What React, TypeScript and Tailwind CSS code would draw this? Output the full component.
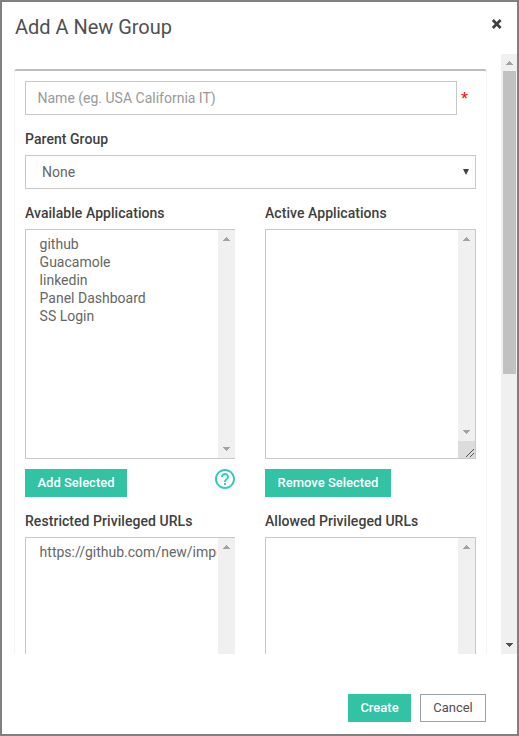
import React from "react";

function Arrow({ down = false, color = "#a3a3a3" }: { down?: boolean; color?: string }) {
  return (
    <svg width="7" height="4" viewBox="0 0 7 4" shapeRendering="crispEdges" fill={color} className="block">
      {down ? (
        <path d="M0 0h7v1H0zM1 1h5v1H1zM2 2h3v1H2zM3 3h1v1H3z" />
      ) : (
        <path d="M3 0h1v1H3zM2 1h3v1H2zM1 2h5v1H1zM0 3h7v1H0z" />
      )}
    </svg>
  );
}

function Label({ children }: { children: React.ReactNode }) {
  return <div className="h-[18px] text-[14px] leading-[18px] font-medium tracking-[0.05px] whitespace-nowrap text-[#404040]">{children}</div>;
}

function ListBox({ items, resizable = false }: { items: string[]; resizable?: boolean }) {
  return (
    <div
      className={
        "flex h-[230px] border-y border-l border-[#c8c8c8] bg-white " +
        (resizable ? "w-[211px] border-r" : "w-[210px]")
      }
    >
      <ul className="mr-px min-w-0 flex-1 overflow-hidden pt-[5px] pl-[13.6px] text-[14px] leading-[18px] text-[#666666]">
        {items.map((item) => (
          <li key={item} className="h-[18px] whitespace-nowrap">
            {item}
          </li>
        ))}
      </ul>
      <div className="flex w-[17px] shrink-0 flex-col bg-[#f0f0f0]">
        <div className="flex flex-1 flex-col items-center justify-between pt-[7px] pb-[7px]">
          <Arrow />
          <Arrow down />
        </div>
        {resizable && (
          <svg width="17" height="17" viewBox="0 0 17 17" className="block bg-[#dcdcdc]">
            <path d="M8 16 L16 8 M12 16 L16 12" stroke="#555" strokeWidth="1" fill="none" />
          </svg>
        )}
      </div>
    </div>
  );
}

function Button({ children, className }: { children: React.ReactNode; className: string }) {
  return (
    <button
      className={
        "flex h-[28px] items-center justify-center text-[13px] leading-[18px] whitespace-nowrap " + className
      }
    >
      {children}
    </button>
  );
}

export default function App() {
  return (
    <div className="flex h-[736px] w-[519px] flex-col overflow-hidden border-2 border-[#808080] bg-white font-['Roboto',sans-serif]">
      <header className="flex h-[52px] shrink-0 justify-between pt-[11px] pr-[14px] pl-[13px]">
        <h1 className="text-[20px] leading-[28px] tracking-[-0.03px] text-[#505050]">Add A New Group</h1>
        <button aria-label="Close" className="mt-[6px] h-[10px] w-[12px]">
          <svg width="12" height="10" viewBox="0 0 12 10" className="block">
            <path d="M1.8 1 L9.6 9 M9.6 1 L1.8 9" stroke="#404040" strokeWidth="2.7" />
          </svg>
        </button>
      </header>

      <div className="flex h-[600px] shrink-0">
        <main className="flex-1 overflow-hidden pt-[15px] pl-[12px]">
          <div className="h-[700px] w-[473px] rounded-[3px] border-x border-t-2 border-x-[#f5f5f5] border-t-[#bebebe] pt-[10px] pl-[10px]">
            <div className="flex">
              <input
                className="h-[34px] w-[432px] border border-[#c8c8c8] px-[11.5px] text-[14px] text-[#606060] placeholder:text-[#999999]"
                placeholder="Name (eg. USA California IT)"
              />
              <span className="ml-[4px] pt-[8px] font-['Liberation_Sans',sans-serif] text-[18px] leading-[20px] text-[#ff0000]">*</span>
            </div>
            <div className="mt-[15px]">
              <Label>Parent Group</Label>
            </div>
            <div className="mt-[7px] flex h-[34px] w-[451px] items-center justify-between border border-[#c8c8c8] pr-[6px] pl-[16px] text-[14px] text-[#666666]">
              <span>None</span>
              <svg width="6" height="6" viewBox="0 0 6 6" className="block">
                <path d="M0 0h6L3 6z" fill="#404040" />
              </svg>
            </div>
            <div className="mt-[15px] flex gap-[30px]">
              <section className="w-[210px]">
                <Label>Available Applications</Label>
                <div className="mt-[7px]">
                  <ListBox items={["github", "Guacamole", "linkedin", "Panel Dashboard", "SS Login"]} />
                </div>
                <div className="mt-[10px] flex h-[28px] justify-between">
                  <Button className="w-[102px] bg-[#32c2a4] font-medium text-white">Add Selected</Button>
                  <svg width="20" height="20" viewBox="2 2 20 20" className="block" fill="#36cbb9">
                    <path d="M11 18h2v-2h-2v2zm1-16C6.48 2 2 6.48 2 12s4.48 10 10 10 10-4.48 10-10S17.52 2 12 2zm0 18c-4.41 0-8-3.59-8-8s3.59-8 8-8 8 3.590 8 8-3.590 8-8 8zm0-14c-2.210 0-4 1.790-4 4h2c0-1.100.9-2 2-2s2 .9 2 2c0 2-3 1.750-3 5h2c0-2.250 3-2.500 3-5 0-2.210-1.790-4-4-4z" />
                  </svg>
                </div>
              </section>
              <section className="w-[211px]">
                <Label>Active Applications</Label>
                <div className="mt-[7px]">
                  <ListBox items={[]} resizable />
                </div>
                <Button className="mt-[10px] w-[126px] bg-[#32c2a4] font-medium text-white">Remove Selected</Button>
              </section>
            </div>
            <div className="mt-[15px] flex gap-[30px]">
              <section className="w-[210px]">
                <Label>Restricted Privileged URLs</Label>
                <div className="mt-[7px]">
                  <ListBox items={["https://github.com/new/import"]} />
                </div>
              </section>
              <section className="w-[211px]">
                <Label>Allowed Privileged URLs</Label>
                <div className="mt-[7px]">
                  <ListBox items={[]} resizable />
                </div>
              </section>
            </div>
          </div>
        </main>
        <div className="flex w-[16px] shrink-0 flex-col items-center justify-between bg-[#f0f0f0] pt-[7px] pb-[7px]">
          <div className="flex flex-col items-center gap-[6px]">
            <Arrow />
            <div className="ml-[1px] h-[303px] w-[13px] bg-[#c1c1c1]" />
          </div>
          <Arrow down color="#505050" />
        </div>
      </div>

      <footer className="flex flex-1 justify-end gap-[9px] pt-[40px] pr-[31px]">
        <Button className="w-[63px] bg-[#32c2a4] font-medium text-white">Create</Button>
        <Button className="w-[66px] border border-[#97a2ad] bg-white text-[#505050]">Cancel</Button>
      </footer>
    </div>
  );
}
